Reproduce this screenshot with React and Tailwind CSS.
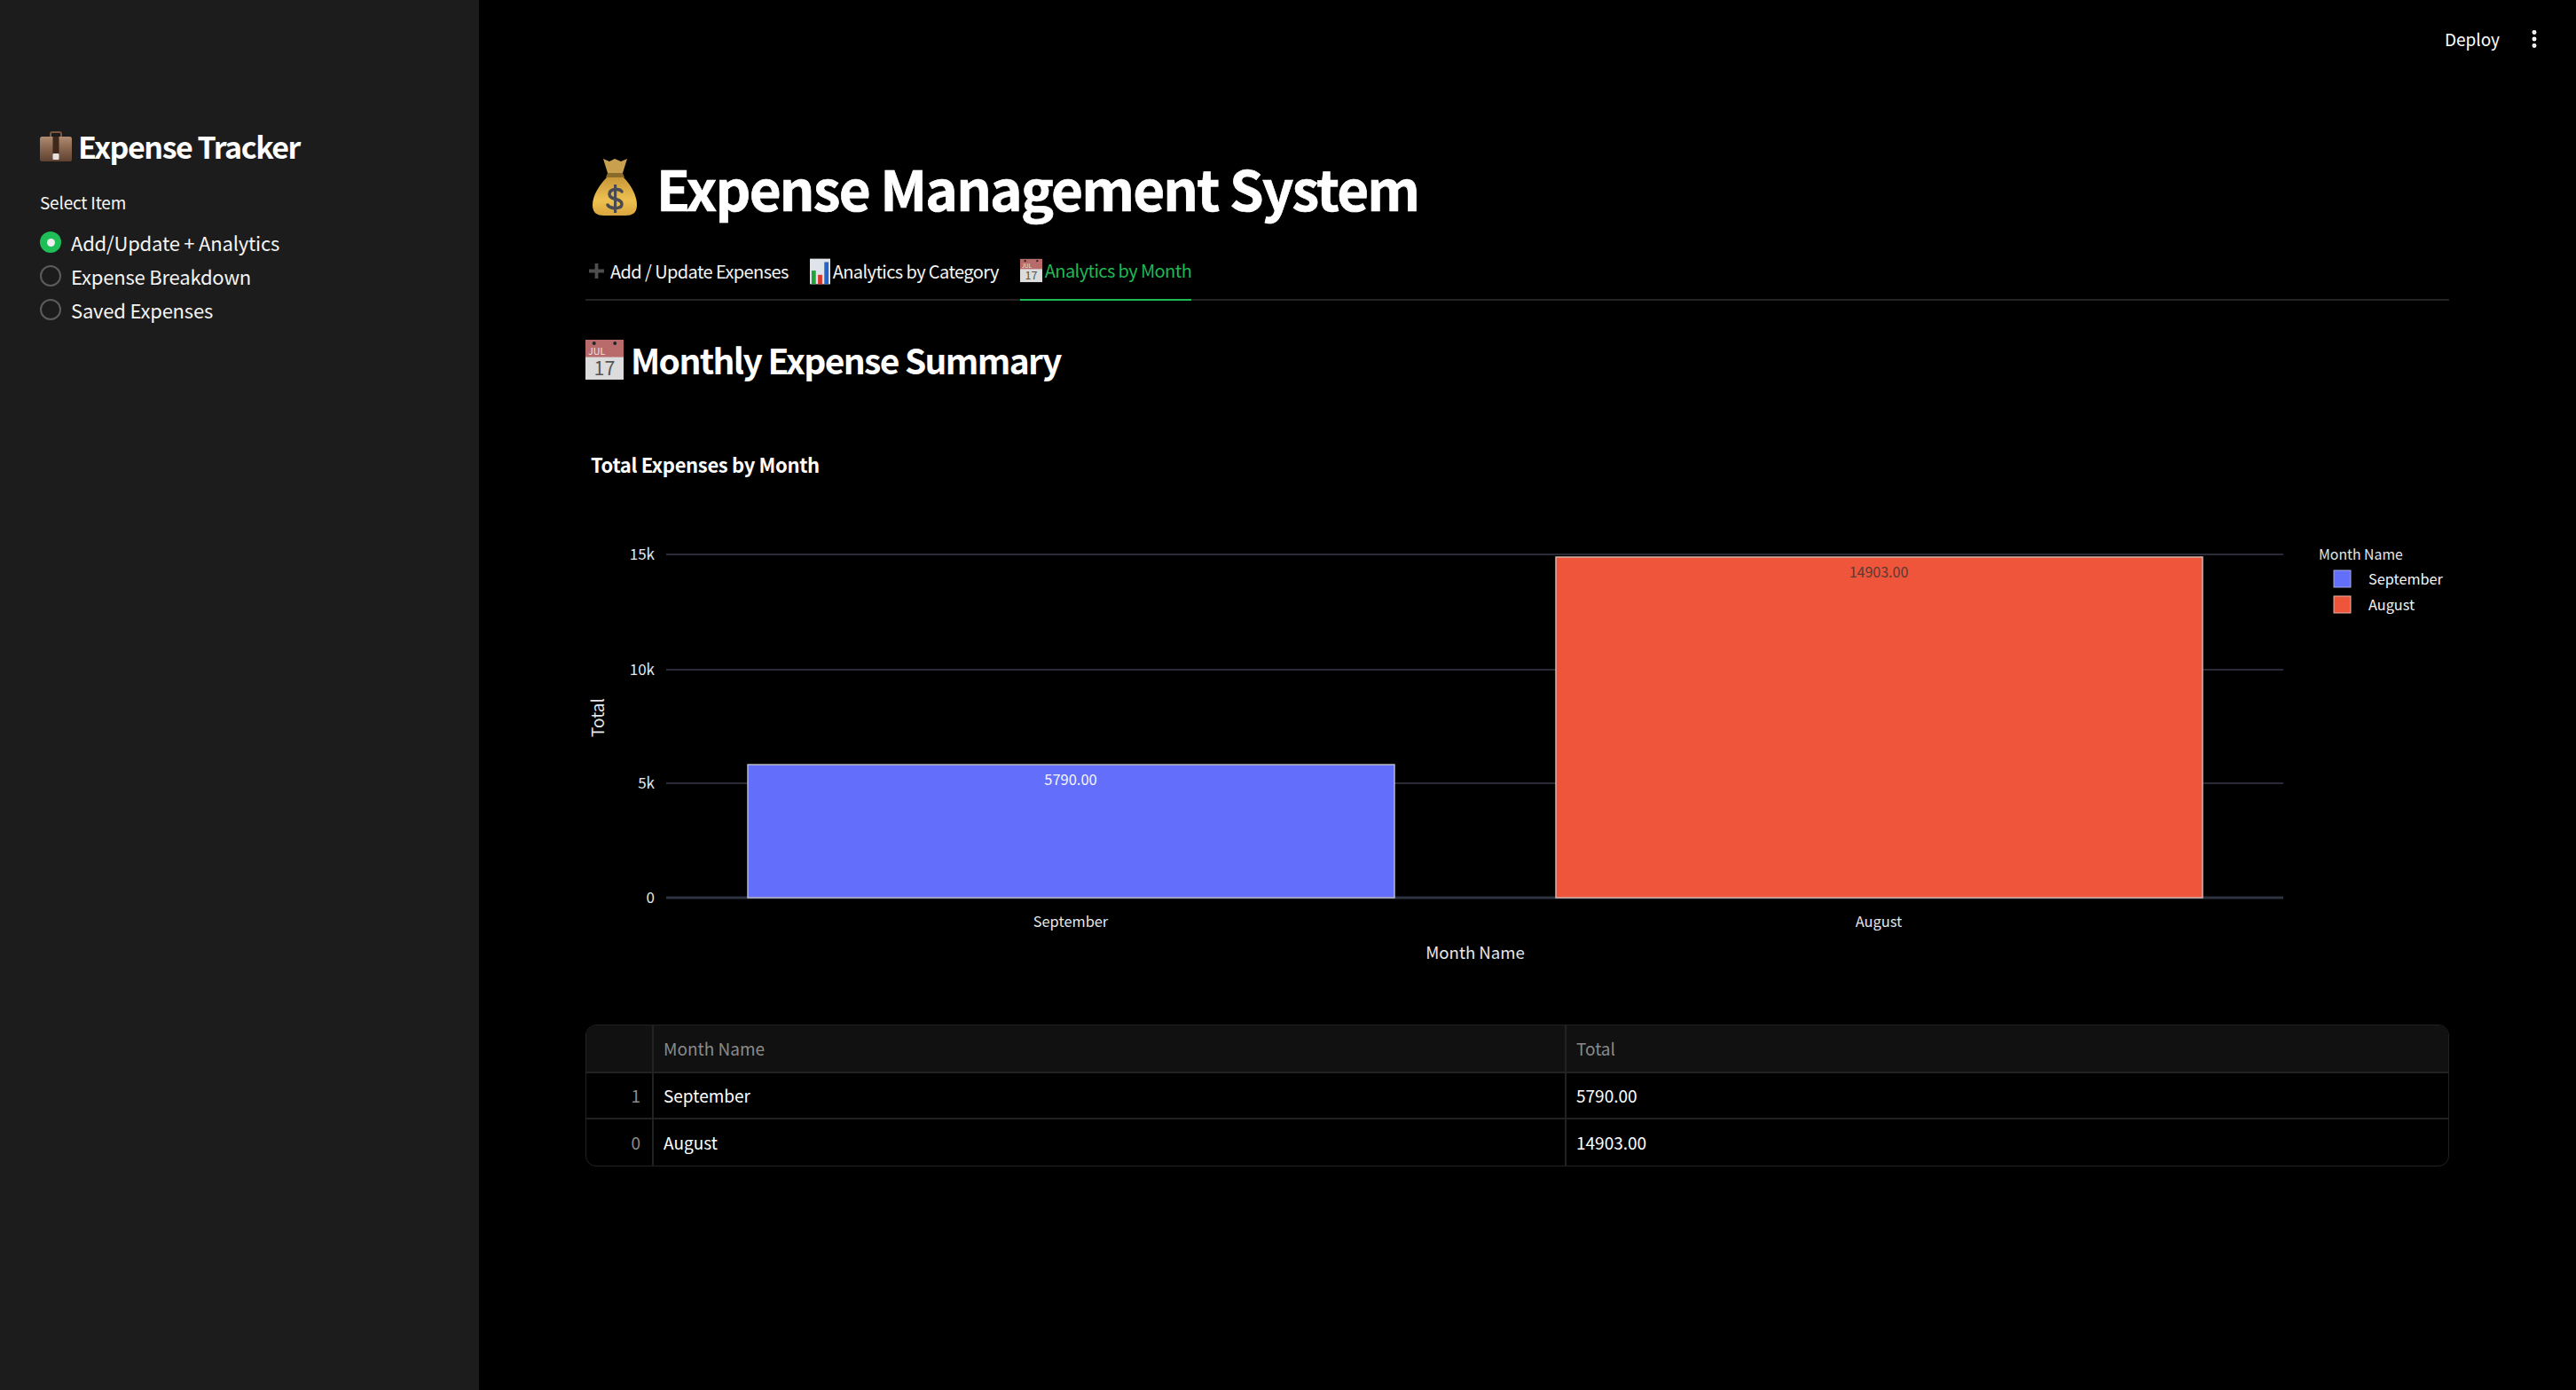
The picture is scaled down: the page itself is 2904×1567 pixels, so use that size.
import { EllipsisVertical } from 'lucide-react';

const Y_TICKS = [
  { label: '15k', y: 134 },
  { label: '10k', y: 264 },
  { label: '5k', y: 392 },
  { label: '0', y: 521 },
];

const ROWS = [
  { index: 1, month: 'September', total: '5790.00' },
  { index: 0, month: 'August', total: '14903.00' },
];

const Briefcase = () => (
  <svg viewBox="0 0 36 34" className="w-[36px] h-[34px] shrink-0">
    <defs>
      <linearGradient id="case" x1="0" y1="0" x2="0" y2="1">
        <stop offset="0" stopColor="#b08c72" />
        <stop offset="0.45" stopColor="#8a6750" />
        <stop offset="1" stopColor="#5f4232" />
      </linearGradient>
    </defs>
    <path d="M12 7V3Q12 1 14 1H22Q24 1 24 3V7" fill="none" stroke="#7a5640" strokeWidth="2" />
    <rect x="0" y="6" width="36" height="28" rx="2.5" fill="url(#case)" />
    <rect x="14.5" y="6" width="7" height="20" fill="#3f271b" />
    <rect x="14.5" y="25" width="7" height="7" rx="1" fill="#e6e2df" />
  </svg>
);

const MoneyBag = () => (
  <svg viewBox="0 0 52 66" className="w-[52px] h-[66px] shrink-0">
    <defs>
      <linearGradient id="bag" x1="0" y1="0" x2="0" y2="1">
        <stop offset="0" stopColor="#c9973a" />
        <stop offset="0.6" stopColor="#eec04f" />
        <stop offset="1" stopColor="#d9a63f" />
      </linearGradient>
    </defs>
    <path d="M13 1L20 4L26 1L33 4L40 1L35 17H18Z" fill="#c9a04e" />
    <path d="M18 17H35L37 22H16Z" fill="#8a6a2b" />
    <path d="M17 22H36C44 30 51 42 51 53C51 62 46 65 38 65H14C6 65 1 62 1 53C1 42 9 30 17 22Z" fill="url(#bag)" />
    <path d="M34 38C32 34.5 20 34 20 41C20 48 34 45 34 52C34 58 21 58 18 53" fill="none" stroke="#4a4a52" strokeWidth="3.5" strokeLinecap="round" />
    <rect x="25" y="30" width="3.2" height="32" fill="#4a4a52" />
  </svg>
);

const Calendar = ({ className }) => (
  <svg viewBox="0 0 44 46" className={className}>
    <rect x="0" y="0" width="44" height="46" fill="#dcdcdc" />
    <rect x="0" y="0" width="44" height="20" fill="#b96a6a" />
    <circle cx="10" cy="4" r="2" fill="#222" />
    <circle cx="34" cy="4" r="2" fill="#222" />
    <text x="3" y="17" fontSize="11" fill="#f0e4e4" fontFamily="Noto Sans CJK SC, sans-serif">JUL</text>
    <text x="22" y="41" fontSize="22" fill="#555" textAnchor="middle" fontFamily="Noto Sans CJK SC, sans-serif">17</text>
  </svg>
);

const BarsIcon = () => (
  <svg viewBox="0 0 24 30" className="w-[23px] h-[30px] shrink-0">
    <rect width="24" height="30" fill="#dfe3ea" />
    <rect x="2" y="14" width="5" height="16" fill="#22a33a" />
    <rect x="9.5" y="19" width="5" height="11" fill="#d9362b" />
    <rect x="17" y="4" width="5" height="26" fill="#2464c8" />
  </svg>
);

const PlusIcon = () => (
  <svg viewBox="0 0 18 18" className="w-[17px] h-[17px] shrink-0">
    <path d="M7 0H11V7H18V11H11V18H7V11H0V7H7Z" fill="#4d4d4d" />
  </svg>
);

const Radio = ({ label, checked }) => (
  <div className="flex items-center h-[38px]">
    {checked ? (
      <span className="w-[24px] h-[24px] rounded-full bg-[#1fbf58] flex items-center justify-center">
        <span className="w-[9px] h-[9px] rounded-full bg-[#eeeeee]" />
      </span>
    ) : (
      <span className="w-[24px] h-[24px] rounded-full border-2 border-[#5c5c5c]" />
    )}
    <span className="ml-[11px] text-[22px] leading-[38px] tracking-[-0.2px] text-[#f5f5f5]">{label}</span>
  </div>
);

const ExpenseChart = () => (
  <svg viewBox="0 48 2101 562" className="mt-[1px] w-[2101px] h-[562px] block overflow-visible">
    {Y_TICKS.map((t) => (
      <g key={t.label}>
        <line x1="91" x2="1914" y1={t.y} y2={t.y} stroke={t.label === '0' ? '#2d3340' : '#2b2b38'} strokeWidth={t.label === '0' ? 3 : 2} />
        <text x="78" y={t.y + 6} fontSize="17" fill="#e4e7ec" textAnchor="end">{t.label}</text>
      </g>
    ))}
    <text x="0" y="0" fontSize="19" fill="#e4e7ec" textAnchor="middle" transform="translate(21 318) rotate(-90)">Total</text>

    <rect x="183" y="371" width="729" height="150" fill="#636efa" stroke="#b9b9c4" strokeWidth="1.5" />
    <text x="547" y="394" fontSize="16.5" fill="#f5f5ff" textAnchor="middle">5790.00</text>
    <text x="547" y="554" fontSize="16.4" fill="#e4e7ec" textAnchor="middle">September</text>

    <rect x="1094" y="137" width="729" height="384" fill="#ef553b" stroke="#d8b4ac" strokeWidth="1.5" />
    <text x="1458" y="160" fontSize="16" fill="#5a3a34" textAnchor="middle">14903.00</text>
    <text x="1458" y="554" fontSize="16.4" fill="#e4e7ec" textAnchor="middle">August</text>

    <text x="1003" y="590" fontSize="18.6" fill="#e4e7ec" textAnchor="middle">Month Name</text>

    <text x="1954" y="140" fontSize="15.8" fill="#e4e7ec">Month Name</text>
    <rect x="1971" y="152" width="19" height="19" fill="#636efa" stroke="#a5a9e0" strokeWidth="1" />
    <text x="2010" y="168" fontSize="16.3" fill="#f2f5fa">September</text>
    <rect x="1971" y="181" width="19" height="19" fill="#ef553b" stroke="#e8b0a4" strokeWidth="1" />
    <text x="2010" y="197" fontSize="16.3" fill="#f2f5fa">August</text>
  </svg>
);

const App = () => {
  return (
    <div className="flex w-full min-h-[1567px] bg-black text-white font-['Noto_Sans_CJK_SC',sans-serif]">
      {/* Sidebar */}
      <aside className="w-[540px] shrink-0 bg-[#1c1c1c] pl-[45px] pt-[145px]">
        <div className="flex items-center h-[40px]">
          <Briefcase />
          <h2 className="ml-[7px] text-[34px] leading-[40px] tracking-[-1.45px] font-bold">Expense Tracker</h2>
        </div>
        <p className="mt-[28px] text-[19px] leading-[30px] tracking-[-0.2px] text-[#f5f5f5]">Select Item</p>
        <div className="mt-[11px]">
          <Radio label="Add/Update + Analytics" checked />
          <Radio label="Expense Breakdown" />
          <Radio label="Saved Expenses" />
        </div>
      </aside>

      {/* Main */}
      <main className="flex-1 min-w-0 pl-[120px] pr-[143px]">
        <div className="h-[88px] -mr-[143px] flex items-center justify-end pr-[34px]">
          <span className="text-[19px] leading-[30px]">Deploy</span>
          <EllipsisVertical className="ml-[26px] w-[26px] h-[26px]" strokeWidth={2.6} />
        </div>

        <div className="flex items-center h-[70px] mt-[88px]">
          <div className="ml-[7px]"><MoneyBag /></div>
          <h1 className="ml-[21px] text-[62px] leading-[70px] tracking-[-1.8px] font-bold [-webkit-text-stroke:0.7px_white]">Expense Management System</h1>
        </div>

        {/* Tabs */}
        <div className="mt-[26px] h-[67px] flex border-b-2 border-[#232323]">
          <div className="flex items-center h-[67px] ml-[4px]">
            <PlusIcon />
            <span className="ml-[7px] text-[20px] leading-[30px] tracking-[-0.6px] text-[#f5f5f5]">Add / Update Expenses</span>
          </div>
          <div className="flex items-center h-[67px] ml-[24px]">
            <BarsIcon />
            <span className="ml-[3px] text-[20px] leading-[30px] tracking-[-0.6px] text-[#f5f5f5]">Analytics by Category</span>
          </div>
          <div className="flex items-center h-[67px] ml-[24px] border-b-2 border-[#1fb954]">
            <Calendar className="w-[25px] h-[30px] shrink-0" />
            <span className="ml-[3px] text-[20px] leading-[30px] tracking-[-0.6px] text-[#1fb954]">Analytics by Month</span>
          </div>
        </div>

        <div className="flex items-center mt-[43px] h-[46px]">
          <Calendar className="w-[43px] h-[45px] shrink-0" />
          <h2 className="ml-[8px] text-[39px] leading-[46px] tracking-[-1.65px] font-bold">Monthly Expense Summary</h2>
        </div>

        <p className="mt-[80px] ml-[6px] text-[22px] leading-[30px] tracking-[-0.35px] font-bold">Total Expenses by Month</p>

        <ExpenseChart />

        {/* Table */}
        <div className="mt-[54px] rounded-[12px] border border-[#222222] overflow-hidden text-[19px]">
          <div className="flex h-[54px] bg-[#111111] border-b-2 border-[#222222] text-[#8a8a8a]">
            <div className="w-[76px] border-r-2 border-[#222222]" />
            <div className="w-[1029px] flex items-center pl-[11px] border-r-2 border-[#222222]">Month Name</div>
            <div className="flex-1 flex items-center pl-[11px]">Total</div>
          </div>
          {ROWS.map((row, i) => (
            <div key={row.index} className={`flex h-[52px] ${i === 0 ? 'border-b-2 border-[#222222]' : ''}`}>
              <div className="w-[76px] flex items-center justify-end pr-[13px] border-r-2 border-[#222222] text-[#8a8a8a]">{row.index}</div>
              <div className="w-[1029px] flex items-center pl-[11px] border-r-2 border-[#222222]">{row.month}</div>
              <div className="flex-1 flex items-center pl-[11px]">{row.total}</div>
            </div>
          ))}
        </div>
      </main>
    </div>
  );
};

export default App;
